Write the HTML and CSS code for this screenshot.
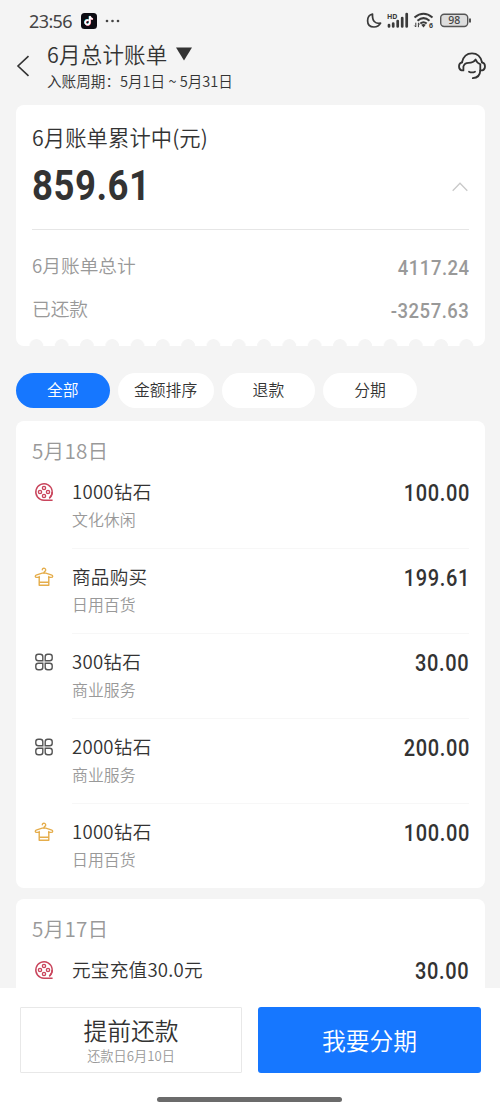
FILE: index.html
```html
<!DOCTYPE html>
<html lang="zh-CN">
<head>
<meta charset="utf-8">
<title>6月总计账单</title>
<link rel="stylesheet" href="styles.css">
</head>
<body>
<svg class="defs" aria-hidden="true">
  <symbol id="reel" viewBox="0 0 20 20">
    <g fill="none" stroke="#c9455c" stroke-width="1.4">
      <path d="M18.600 18.200H10a8.200 8.200 0 1 1 5.800-2.400"/>
      <path d="M15.200 16.400A8.200 8.200 0 0 0 18.200 10"/>
      <circle cx="10" cy="6" r="1.6"/><circle cx="6" cy="10" r="1.6"/>
      <circle cx="14" cy="10" r="1.6"/><circle cx="10" cy="14" r="1.6"/>
    </g>
  </symbol>
  <symbol id="shirt" viewBox="0 0 20 20">
    <g fill="none" stroke="#e5ad4b" stroke-width="1.4" stroke-linejoin="round" stroke-linecap="round">
      <path d="M8.300 2.800a1.700 1.700 0 1 1 2.500 1.600Q10 4.900 10 6"/>
      <path d="M5.400 10.400H3Q1.300 10.400 1.300 9.200 1.300 8.300 2.800 7.800L8.200 6.200Q10 5.700 11.800 6.200L17.200 7.800Q18.700 8.300 18.700 9.200 18.700 10.400 17 10.400H14.600"/>
      <path d="M5.200 9.500V18.300H14.800V9.500M5.200 15.300H14.800"/>
    </g>
  </symbol>
  <symbol id="grid" viewBox="0 0 20 20">
    <g fill="none" stroke="#555" stroke-width="1.4">
      <path d="M4.300 2.200H6.300Q8.800 2.200 8.800 4.700V8.800H4.300Q1.800 8.800 1.800 6.300V4.700Q1.800 2.200 4.300 2.200ZM13.700 2.200H15.700Q18.200 2.200 18.200 4.700V6.300Q18.200 8.800 15.700 8.800H11.200V4.700Q11.200 2.200 13.700 2.200ZM4.300 11.200H8.800V15.300Q8.800 17.800 6.300 17.800H4.300Q1.800 17.800 1.800 15.300V13.700Q1.800 11.200 4.300 11.200ZM11.200 11.200H15.700Q18.200 11.200 18.200 13.700V15.300Q18.200 17.800 15.700 17.800H13.700Q11.200 17.800 11.200 15.300Z"/>
    </g>
  </symbol>
</svg>
<div class="screen">
  <div class="status">
    <span class="clock">23:56</span>
    <svg class="app" viewBox="0 0 16 16"><rect width="16" height="16" rx="3.500" fill="#0c0b12"/><g fill="none" stroke-width="1.700"><path stroke="#35d5dc" d="M7.500 7.200a2.300 2.300 0 1 0 1 2.200V3Q9 5.600 11.500 5.900"/><path stroke="#ed4565" d="M8 7.700a2.300 2.300 0 1 0 1.200 2.200V3.400Q9.600 6 12.100 6.200"/><path stroke="#fff" d="M7.700 7.400a2.300 2.300 0 1 0 1.100 2.200V3.200Q9.300 5.800 11.800 6"/></g></svg>
    <svg class="dots" viewBox="0 0 15 4"><g fill="#444"><circle cx="2" cy="2" r="1.300"/><circle cx="7.500" cy="2" r="1.300"/><circle cx="13" cy="2" r="1.300"/></g></svg>
    <svg class="signals" viewBox="0 0 106 18">
      <path d="M6.500 2Q1.600 3.300 1.600 8.700 1.600 15 8 15 12.500 15 14.600 11.200 6 12.500 6.500 2Z" fill="none" stroke="#3a3a3a" stroke-width="1.700" stroke-linejoin="round"/>
      <text x="21" y="6.500" class="tiny">HD</text>
      <path d="M23 15V13.500M27.200 15V12M31.700 15V9.500M36.200 15V6.500M40.700 15V2.500" stroke="#3a3a3a" stroke-width="2.700" stroke-linecap="round" transform="translate(0 -.5)"/>
      <g fill="none" stroke="#3a3a3a" stroke-width="2"><path d="M48.500 5.500Q57.500-2 66.500 5.500M51.500 8.700Q57.500 3.600 63.500 8.700M54.300 11.500Q57.500 8.900 60.700 11.500"/></g>
      <path d="M55.200 12.700Q57.500 11.200 59.800 12.700L57.500 15.500Z" fill="#3a3a3a"/>
      <path d="M49.800 10.700V15M48.400 13.600L49.800 15M52.400 15.200V11M52.400 11L53.800 12.400" stroke="#3a3a3a" stroke-width="1" fill="none"/>
      <text x="63" y="15.500" class="tiny">6</text>
      <rect x="74.700" y="2.200" width="27" height="12.300" rx="3.500" fill="#ddd" stroke="#555" stroke-width="1.400"/>
      <path d="M104 6.500V10.500" stroke="#444" stroke-width="1.800"/>
      <text x="88.300" y="12.200" text-anchor="middle" class="level">98</text>
    </svg>
  </div>

  <header class="head">
    <svg class="back" viewBox="0 0 14 22"><path d="M12.500 1.200L2 11L12.500 20.800" fill="none" stroke="#333" stroke-width="1.600"/></svg>
    <div class="head-text">
      <div class="title">6月总计账单<svg class="drop" viewBox="0 0 16 14"><path d="M0 .5H16L8 13.500Z" fill="#333"/></svg></div>
      <div class="period">入账周期：5月1日 ~ 5月31日</div>
    </div>
    <svg class="service" viewBox="0 0 28 28">
      <g fill="none" stroke="#333" stroke-width="1.800" stroke-linecap="round" stroke-linejoin="round">
        <path d="M4 10.300Q6 1.400 14 1.400T24 10.300"/>
        <path d="M4.200 10.300Q1 10.800 1 14.300T3.600 18.400H5.400V14.500Q6.500 11 10.500 10.900 15.500 10.900 17.600 7.500 18.500 10.500 22.300 12.300V18.400H24.400Q27 17.800 27 14.300T23.800 10.300"/>
        <path d="M22.300 18.400Q22 25.800 14.800 26.200M11 19.700Q14 21.200 17 19.700"/>
      </g>
    </svg>
  </header>

  <section class="card summary">
    <div class="sum-title">6月账单累计中(元)</div>
    <div class="sum-main"><span class="total">859.61</span><svg class="fold" viewBox="0 0 16 10"><path d="M.7 8.800L8 1.300L15.300 8.800" fill="none" stroke="#c9c9c9" stroke-width="1.300"/></svg></div>
    <div class="line"><span>6月账单总计</span><span class="money">4117.24</span></div>
    <div class="line"><span>已还款</span><span class="money">-3257.63</span></div>
  </section>

  <nav class="tabs">
    <span class="tab on">全部</span><span class="tab wide">金额排序</span><span class="tab">退款</span><span class="tab">分期</span>
  </nav>

  <section class="card day">
    <div class="date">5月18日</div>
    <div class="row"><svg class="icon"><use href="#reel"/></svg><div class="body"><div><div class="name">1000钻石</div><div class="kind">文化休闲</div></div><span class="amount">100.00</span></div></div>
    <div class="row"><svg class="icon"><use href="#shirt"/></svg><div class="body"><div><div class="name">商品购买</div><div class="kind">日用百货</div></div><span class="amount">199.61</span></div></div>
    <div class="row"><svg class="icon"><use href="#grid"/></svg><div class="body"><div><div class="name">300钻石</div><div class="kind">商业服务</div></div><span class="amount">30.00</span></div></div>
    <div class="row"><svg class="icon"><use href="#grid"/></svg><div class="body"><div><div class="name">2000钻石</div><div class="kind">商业服务</div></div><span class="amount">200.00</span></div></div>
    <div class="row"><svg class="icon"><use href="#shirt"/></svg><div class="body"><div><div class="name">1000钻石</div><div class="kind">日用百货</div></div><span class="amount">100.00</span></div></div>
  </section>

  <section class="card day next">
    <div class="date">5月17日</div>
    <div class="row"><svg class="icon"><use href="#reel"/></svg><div class="body"><div class="name">元宝充值30.0元</div><span class="amount">30.00</span></div></div>
  </section>

  <footer class="foot">
    <div class="buttons">
      <div class="btn early"><div class="btn-main">提前还款</div><div class="btn-sub">还款日6月10日</div></div>
      <div class="btn split">我要分期</div>
    </div>
    <div class="home"></div>
  </footer>
</div>
</body>
</html>
```
FILE: styles.css
```css
* { box-sizing: border-box; }
body { margin: 0; font-family: "Noto Sans CJK SC", sans-serif; font-weight: 350; color: #333; background: #f4f4f4; }
svg { display: block; flex: none; }
.defs { display: none; }
.screen { width: 500px; height: 1111px; overflow: hidden; display: flex; flex-direction: column; background: #f4f4f4; }
.screen > * { flex: none; }

.status { height: 42px; display: flex; align-items: center; padding: 0 28px 0 29px; }
.clock { font: 18px/20px "Noto Sans", sans-serif; letter-spacing: -.6px; width: 52px; color: #444; }
.app { width: 16px; height: 16px; }
.dots { width: 15px; height: 4px; margin-left: 8px; }
.signals { width: 106px; height: 18px; margin-left: auto; }
.tiny { font: 700 7px "Noto Sans", sans-serif; fill: #3a3a3a; }
.level { font: 500 10.500px "Noto Sans", sans-serif; fill: #444; }

.head { height: 63px; display: flex; padding: 0 14px 0 16px; }
.back { width: 14px; height: 22px; margin-top: 13px; }
.head-text { margin-left: 17px; flex: 1; }
.title { display: flex; align-items: center; height: 24px; font-size: 21.500px; line-height: 24px; letter-spacing: .2px; }
.drop { width: 16px; height: 14px; margin-left: 8px; }
.period { font-size: 14.600px; line-height: 20px; margin-top: 5px; }
.service { width: 28px; height: 28px; margin-top: 10px; }

.card { width: 469px; margin-left: 16px; padding: 0 16px; background: #fff; border-radius: 8px; }
.summary { height: 241px; position: relative; padding-top: 18px; }
.summary::after {
  content: ""; position: absolute; left: 0; right: 0; bottom: 0; height: 8px;
  background: radial-gradient(circle at 50% 100%, #f4f4f4 6.500px, transparent 7.200px) 7.700px 0 / 25.300px 8px repeat-x;
}
.sum-title { font-size: 21.300px; line-height: 28px; letter-spacing: .1px; }
.sum-main { height: 79px; border-bottom: 1px solid #e6e6e6; display: flex; justify-content: space-between; padding-top: 14px; margin-bottom: 14px; }
.total { font: 700 42px/42px Roboto, sans-serif; letter-spacing: .6px; transform: scaleX(.87); transform-origin: left; }
.fold { width: 16px; height: 10px; margin: 17px 1px 0 0; }
.line { height: 43px; display: flex; justify-content: space-between; font-size: 18.700px; line-height: 43px; color: #999; }
.line > span:first-child { line-height: 41px; }
.money { font: 500 21px/49px Roboto, sans-serif; letter-spacing: .6px; margin-right: -.5px; transform: scaleX(.88); transform-origin: right; }

.tabs { display: flex; gap: 8px; margin: 27px 0 13px 16px; height: 35px; }
.tab { width: 93.600px; height: 35px; border-radius: 18px; background: #fff; text-align: center; font-size: 15.800px; line-height: 34px; }
.wide { width: 96px; }
.on { background: #1677ff; color: #fff; }

.day { height: 467px; padding-top: 13px; }
.date { font-size: 20.700px; line-height: 32px; height: 41px; color: #999; letter-spacing: .2px; }
.row { display: flex; height: 85px; padding-left: 2px; }
.icon { width: 20px; height: 20px; margin-top: 7px; }
.body { margin-left: 18px; flex: 1; display: flex; justify-content: space-between; }
.row + .row .body { border-top: 1px solid #f7f7f7; margin-top: -12px; padding-top: 11px; }
.name { font-size: 18.600px; line-height: 32px; letter-spacing: .25px; }
.kind { font-size: 15.900px; line-height: 22px; padding-top: 2px; color: #999; }
.amount { font: 500 23px/37px Roboto, sans-serif; letter-spacing: .7px; margin-right: -.5px; transform: scaleX(.87); transform-origin: right; }
.next { margin-top: 11px; height: 89px; border-radius: 8px 8px 0 0; }

.foot { height: 123px; background: #fff; padding: 19px 19px 0 20px; }
.buttons { display: flex; gap: 16px; height: 66px; }
.btn { width: 222px; border-radius: 3px; text-align: center; }
.early { border: 1px solid #e8e8e8; border-radius: 1px; padding-top: 6px; }
.btn-main { font-size: 23.800px; line-height: 32px; }
.btn-sub { font-size: 13.200px; line-height: 20px; color: #999; }
.split { width: 223px; background: #1677ff; color: #fff; font-size: 23.800px; line-height: 65px; }
.home { width: 185px; height: 5px; border-radius: 3px; background: #6b6b6b; margin: 24px 0 0 137px; }
```
